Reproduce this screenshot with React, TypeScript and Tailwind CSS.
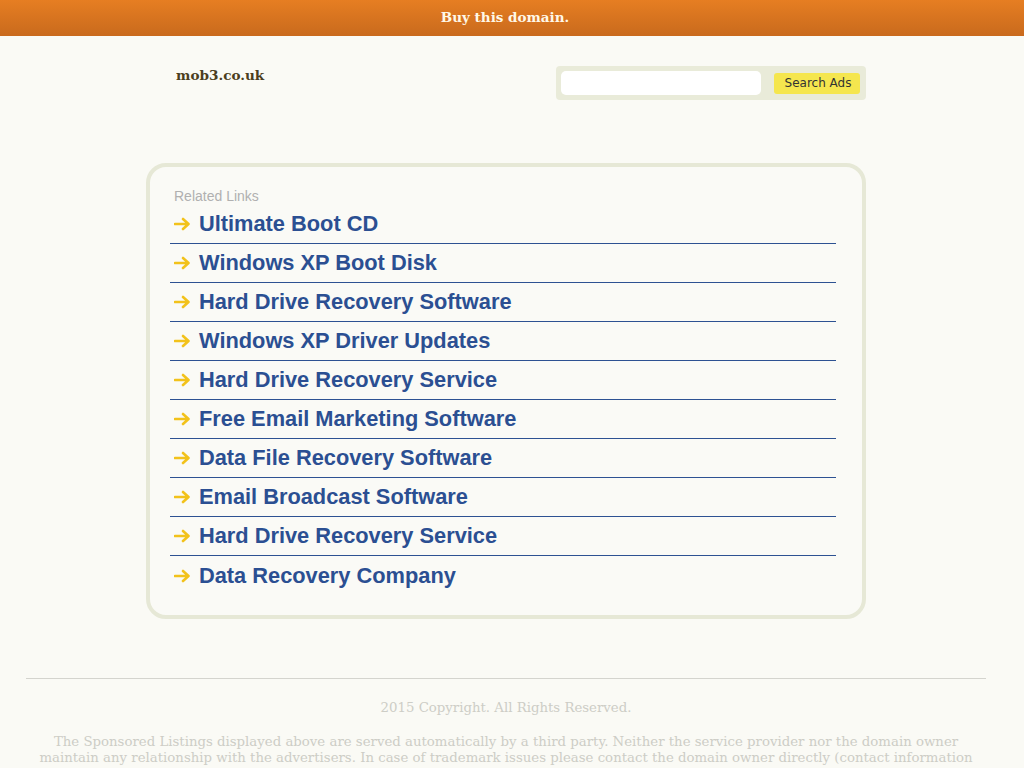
import React from "react";

const links = [
  "Ultimate Boot CD",
  "Windows XP Boot Disk",
  "Hard Drive Recovery Software",
  "Windows XP Driver Updates",
  "Hard Drive Recovery Service",
  "Free Email Marketing Software",
  "Data File Recovery Software",
  "Email Broadcast Software",
  "Hard Drive Recovery Service",
  "Data Recovery Company",
];

const serif = "font-['DejaVu_Serif',serif]";

function Arrow() {
  return (
    <svg width="17" height="14" viewBox="0 0 17 14" fill="none" className="shrink-0">
      <path d="M1 7H14M9 2L14.5 7L9 12" stroke="#f2c21b" strokeWidth="2.6" strokeLinecap="round" strokeLinejoin="round" />
    </svg>
  );
}

export default function App() {
  return (
    <div className="min-h-[768px] bg-[#fafaf5]">
      {/* top banner */}
      <div className="h-[36px] bg-gradient-to-b from-[#e67e22] to-[#c96a1d]">
        <div className="w-[1010px] h-full flex items-center justify-center pb-[2px]">
          <a href="#" className={`${serif} font-bold text-[13.5px] text-[#fff8e8]`}>
            Buy this domain.
          </a>
        </div>
      </div>

      <div className="w-[1012px]">
        {/* header */}
        <div className="w-[720px] mx-auto pl-[30px] pt-[30px] flex justify-between items-start">
          <div className={`${serif} font-bold text-[13.6px] text-[#4b3e20] -mt-[1px]`}>mob3.co.uk</div>
          <div className="w-[310px] h-[34px] bg-[#e9ebd9] rounded-[4px] flex items-center pl-[5px] pr-[6px]">
            <div className="w-[200px] h-[24px] bg-white rounded-[5px]" />
            <button className="ml-auto h-[21px] w-[86px] bg-[#f5e64e] rounded-[3px] text-[12px] text-[#333] font-['DejaVu_Sans',sans-serif] flex items-center justify-center pl-[2px]">
              Search Ads
            </button>
          </div>
        </div>

        {/* card */}
        <div className="w-[720px] mx-auto mt-[63px] border-[4px] border-[#e6e8d6] rounded-[20px] bg-[#fafaf6] pl-[20px] pr-[26px] pt-[21px] pb-[20px]">
          <div className="pl-[4px] text-[14px] text-[#b0b0b0] font-['Liberation_Sans',sans-serif] leading-[16px]">Related Links</div>
          <div className="mt-[1px]">
            {links.map((l, i) => (
              <div
                key={i}
                className={`h-[39px] flex items-center ${i < links.length - 1 ? "border-b border-[#2d5192]" : ""}`}
              >
                <div className="pl-[4px] w-[29px] flex items-center">
                  <Arrow />
                </div>
                <a href="#" className="font-['Liberation_Sans',sans-serif] font-bold text-[21.8px] text-[#2b4f92] leading-none">
                  {l}
                </a>
              </div>
            ))}
          </div>
        </div>

        {/* footer */}
        <div className="mx-[26px] mt-[59px] border-t border-[#d4d4ce]">
          <p className={`${serif} text-[13.3px] text-[#cdcdc6] text-center mt-[19px]`}>
            2015 Copyright. All Rights Reserved.
          </p>
          <p className={`${serif} text-[13.3px] leading-[16px] text-[#cdcdc6] text-center mt-[16px]`}>
            The Sponsored Listings displayed above are served automatically by a third party. Neither the service provider nor the domain owner maintain any relationship with the advertisers. In case of trademark issues please contact the domain owner directly (contact information can be found in whois).
          </p>
        </div>
      </div>
    </div>
  );
}
